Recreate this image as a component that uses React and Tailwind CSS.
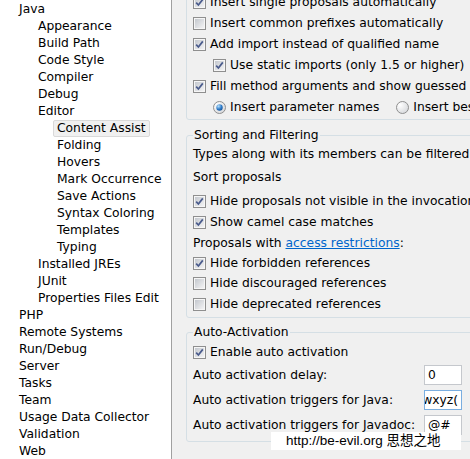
import React from 'react';

const font = { fontFamily: '"DejaVu Sans", "Liberation Sans", sans-serif' };

const tree = [
  ['Java', 0],
  ['Appearance', 1],
  ['Build Path', 1],
  ['Code Style', 1],
  ['Compiler', 1],
  ['Debug', 1],
  ['Editor', 1],
  ['Content Assist', 2, true],
  ['Folding', 2],
  ['Hovers', 2],
  ['Mark Occurrence', 2],
  ['Save Actions', 2],
  ['Syntax Coloring', 2],
  ['Templates', 2],
  ['Typing', 2],
  ['Installed JREs', 1],
  ['JUnit', 1],
  ['Properties Files Edit', 1],
  ['PHP', 0],
  ['Remote Systems', 0],
  ['Run/Debug', 0],
  ['Server', 0],
  ['Tasks', 0],
  ['Team', 0],
  ['Usage Data Collector', 0],
  ['Validation', 0],
  ['Web', 0],
];

const indent = ['pl-[19px]', 'pl-[38px]', 'pl-[57px]'];

const Check = ({ checked }) => (
  <svg width="13" height="13" viewBox="0 0 13 13" className="shrink-0">
    <defs>
      <linearGradient id="cbInner" x1="0" y1="0" x2="1" y2="1">
        <stop offset="0" stopColor="#c4c8ce" />
        <stop offset="1" stopColor="#f3f3f4" />
      </linearGradient>
    </defs>
    <rect x="0.5" y="0.5" width="12" height="12" fill="#f6f6f6" stroke="#8f8f8f" />
    <rect x="2" y="2" width="9" height="9" fill="url(#cbInner)" />
    {checked && (
      <path d="M3.2 6.6 L5.4 9 L9.8 3.4" stroke="#4a5b8c" strokeWidth="1.7" fill="none" />
    )}
  </svg>
);

const Radio = ({ checked }) => (
  <svg width="13" height="13" viewBox="0 0 13 13" className="shrink-0">
    <defs>
      <radialGradient id="rbBg" cx="0.3" cy="0.3" r="0.8">
        <stop offset="0" stopColor="#ffffff" />
        <stop offset="1" stopColor="#d6d8db" />
      </radialGradient>
      <radialGradient id="rbDot" cx="0.35" cy="0.3" r="0.8">
        <stop offset="0" stopColor="#b6e0fb" />
        <stop offset="0.6" stopColor="#2d79c7" />
        <stop offset="1" stopColor="#134c8e" />
      </radialGradient>
    </defs>
    <circle cx="6.5" cy="6.5" r="6" fill="url(#rbBg)" stroke="#8f8f8f" />
    {checked && <circle cx="6.5" cy="6.5" r="3.2" fill="url(#rbDot)" />}
  </svg>
);

const CheckRow = ({ checked, label, className = '' }) => (
  <div className={`flex h-[21px] items-center gap-1 whitespace-nowrap ${className}`}>
    <Check checked={checked} />
    <span>{label}</span>
  </div>
);

const Field = ({ value, focused, end }) => (
  <div
    className={`flex h-[20px] w-[38px] items-center overflow-hidden whitespace-nowrap border bg-white px-[3px] ${
      focused ? 'border-[#7aaee0]' : 'border-[#c5c8cd]'
    } ${end ? 'justify-end' : ''}`}
  >
    <span className="shrink-0">{value}</span>
  </div>
);

export default function App() {
  return (
    <div className="relative flex h-[459px] w-[470px] overflow-hidden text-[12.3px] text-black" style={font}>
      {/* Preference tree */}
      <div className="w-[172px] shrink-0 border-r border-[#a0a0a0] bg-white pt-[1px]">
        {tree.map(([name, level, sel]) => (
          <div key={name} className={`h-[17px] whitespace-nowrap leading-[17px] ${indent[level]}`}>
            {sel ? (
              <span className="-ml-[4px] inline-block rounded-[2px] border border-[#d9d9d9] bg-[#f0f0f0] px-[3px] leading-[15px]">
                {name}
              </span>
            ) : (
              name
            )}
          </div>
        ))}
      </div>

      {/* Content Assist page */}
      <div className="min-w-0 flex-1 bg-[#f0f0f0] pl-[14px]">
        <fieldset className="-mt-[10px] w-[290px] rounded-[3px] border border-[#d5dfe5] pb-[1px] pl-[6px] pt-[1px]">
          <CheckRow checked label="Insert single proposals automatically" />
          <CheckRow label="Insert common prefixes automatically" />
          <CheckRow checked label="Add import instead of qualified name" />
          <CheckRow checked label="Use static imports (only 1.5 or higher)" className="pl-[20px]" />
          <CheckRow checked label="Fill method arguments and show guessed arguments" />
          <div className="flex h-[21px] items-center whitespace-nowrap pl-[20px]">
            <Radio checked />
            <span className="ml-1">Insert parameter names</span>
            <span className="ml-[17px] flex"><Radio /></span>
            <span className="ml-1">Insert best guessed arguments</span>
          </div>
        </fieldset>

        <fieldset className="mt-[7px] w-[290px] rounded-[3px] border border-[#d5dfe5] pb-[2px] pl-[6px]">
          <legend className="px-[1px] leading-[17px]">Sorting and Filtering</legend>
          <div className="flex h-[21px] items-center whitespace-nowrap">
            Types along with its members can be filtered using type filters.
          </div>
          <div className="mt-[2px] flex h-[21px] items-center whitespace-nowrap">Sort proposals</div>
          <CheckRow checked label="Hide proposals not visible in the invocation context" className="mt-[3px]" />
          <CheckRow checked label="Show camel case matches" />
          <div className="flex h-[20px] items-center whitespace-nowrap">
            Proposals with&nbsp;<span className="text-[#0066cc] underline">access restrictions</span>:
          </div>
          <CheckRow checked label="Hide forbidden references" className="!h-[20px]" />
          <CheckRow label="Hide discouraged references" />
          <CheckRow label="Hide deprecated references" />
        </fieldset>

        <fieldset className="mt-[6px] w-[290px] rounded-[3px] border border-[#d5dfe5] pb-[6px] pl-[6px] pr-[13px]">
          <legend className="px-[1px] leading-[17px]">Auto-Activation</legend>
          <CheckRow checked label="Enable auto activation" className="mt-[1px]" />
          <div className="mt-[2px] flex flex-col gap-[5px]">
            <div className="flex h-[20px] items-center justify-between whitespace-nowrap">
              <span>Auto activation delay:</span>
              <Field value="0" />
            </div>
            <div className="flex h-[20px] items-center justify-between whitespace-nowrap">
              <span>Auto activation triggers for Java:</span>
              <Field value=".abcdefghijklmnopqrstuvwxyz(" focused end />
            </div>
            <div className="flex h-[20px] items-center justify-between whitespace-nowrap">
              <span>Auto activation triggers for Javadoc:</span>
              <Field value="@#" />
            </div>
          </div>
        </fieldset>
      </div>

      {/* watermark */}
      <div
        className="absolute left-[271px] top-[432px] flex h-[18px] w-[190px] items-center bg-white pl-[15px] text-[13.5px] leading-none"
        style={{ fontFamily: '"Liberation Sans", "Noto Sans CJK SC", sans-serif' }}
      >
        http://be-evil.org 思想之地
      </div>
    </div>
  );
}
